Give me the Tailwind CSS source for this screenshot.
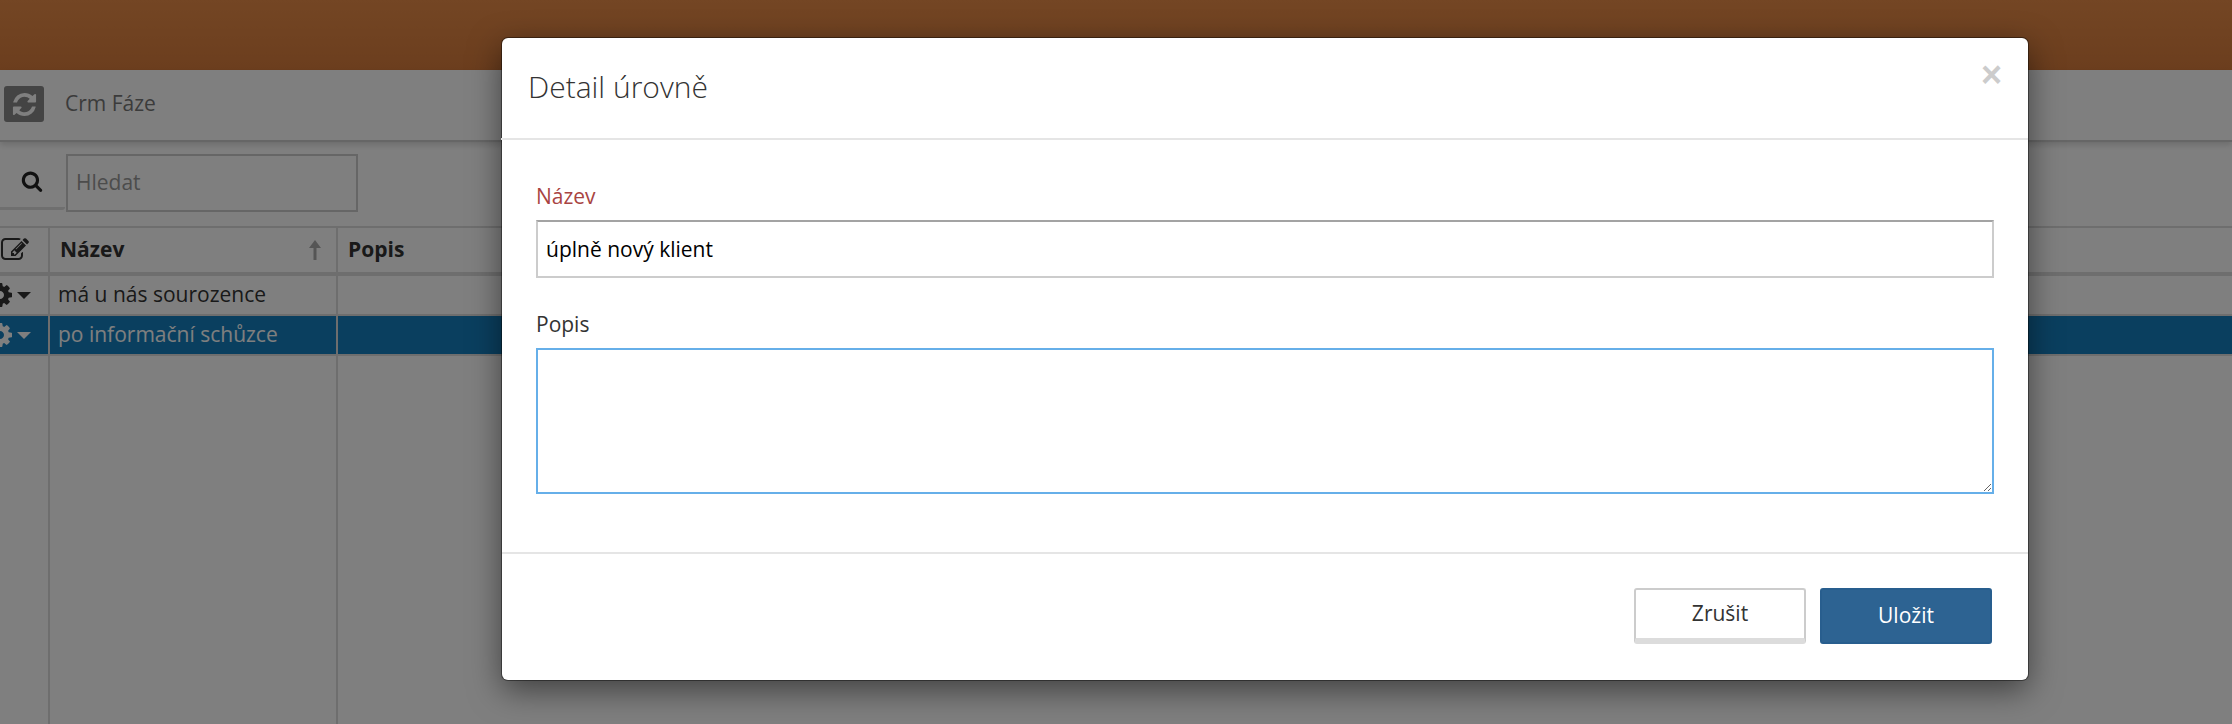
<!DOCTYPE html>
<html lang="cs">
<head>
  <meta charset="UTF-8" />
  <title>Crm Fáze</title>
  <script src="https://cdn.jsdelivr.net/npm/@tailwindcss/browser@4"></script>
</head>
<body class="relative h-[724px] w-[2232px] overflow-hidden bg-white font-['Open_Sans',sans-serif] text-[21px] text-[#333]">
  <!-- page behind the dialog -->
  <div class="h-[70px] bg-gradient-to-b from-[#e88c48] to-[#d87c3c]"></div>

  <div class="flex h-[72px] items-center border-b-2 border-[#cccccc] pb-[2px] pl-1 shadow-[0_3px_6px_rgba(0,0,0,0.15)]">
    <button class="flex h-9 w-10 items-center justify-center rounded-[3px] bg-[#888888]">
      <svg class="h-[27px] w-[27px] fill-white" viewBox="0 0 1792 1792"><path d="M1639 1056q0 5-1 7-64 268-268 434.500t-478 166.500q-146 0-282.500-55t-243.500-157l-129 129q-19 19-45 19t-45-19-19-45v-448q0-26 19-45t45-19h448q26 0 45 19t19 45-19 45l-137 137q71 66 161 102t187 36q134 0 250-65t186-179q11-17 53-117 8-23 30-23h192q13 0 22.500 9.500t9.500 22.500zm25-800v448q0 26-19 45t-45 19h-448q-26 0-45-19t-19-45 19-45l138-138q-148-137-349-137-134 0-250 65t-186 179q-11 17-53 117-8 23-30 23h-199q-13 0-22.500-9.500t-9.500-22.500v-7q65-268 270-434.500t480-166.500q146 0 284 55.500t245 156.500l130-129q19-19 45-19t45 19 19 45z"/></svg>
    </button>
    <span class="ml-[21px] text-[#777]">Crm Fáze</span>
  </div>

  <div class="flex h-[84px] items-start pt-3">
    <button class="flex h-[56px] w-[65px] items-center justify-end rounded-r-[3px] border-b-[3px] border-[#dedede] pr-[22px]">
      <svg class="h-[22px] w-[22px] fill-[#222]" viewBox="0 0 1792 1792"><path d="M1216 832q0-185-131.500-316.500t-316.500-131.500-316.500 131.500-131.500 316.500 131.500 316.500 316.500 131.500 316.500-131.500 131.500-316.500zm512 832q0 52-38 90t-90 38q-54 0-90-38l-343-342q-179 124-399 124-143 0-273.500-55.500t-225-150-150-225-55.500-273.500 55.500-273.500 150-225 225-150 273.500-55.500 273.500 55.500 225 150 150 225 55.500 273.500q0 220-124 399l343 343q37 37 37 90z"/></svg>
    </button>
    <div class="ml-px flex h-[58px] w-[292px] items-center border-2 border-[#cccccc] pl-2 text-[#999]">Hledat</div>
  </div>

  <div class="grid h-[498px] grid-cols-[50px_288px_1fr] grid-rows-[50px_40px_40px_1fr]">
    <div class="flex items-center border-t-2 border-r-2 border-b-4 border-[#dddddd] pl-px">
      <svg class="h-[28px] w-[28px] fill-[#333]" viewBox="0 0 1792 1792"><path d="M888 1184l116-116-152-152-116 116v56h96v96h56zm440-720q-16-16-33 1l-350 350q-17 17-1 33t33-1l350-350q17-17 1-33zm80 594v190q0 119-84.500 203.500t-203.500 84.500h-832q-119 0-203.500-84.500t-84.500-203.500v-832q0-119 84.500-203.500t203.500-84.500h832q63 0 117 25 15 7 18 23 3 17-9 29l-49 49q-14 14-32 8-23-6-45-6h-832q-66 0-113 47t-47 113v832q0 66 47 113t113 47h832q66 0 113-47t47-113v-126q0-13 9-22l64-64q15-15 35-7t20 29zm-96-738l288 288-672 672h-288v-288zm444 132l-92 92-288-288 92-92q28-28 68-28t68 28l152 152q28 28 28 68t-28 68z"/></svg>
    </div>
    <div class="flex items-center justify-between border-t-2 border-r-2 border-b-4 border-[#dddddd] pr-[14px] pl-[10px] font-bold">
      <span>Název</span>
      <svg class="h-[20px] w-[14px] fill-[#aaa]" viewBox="0 0 14 20"><path d="M7 0l6 8H8.500v12h-3V8H1z"/></svg>
    </div>
    <div class="flex items-center border-t-2 border-b-4 border-[#dddddd] pl-[10px] font-bold">Popis</div>

    <div class="flex items-center border-r-2 border-b-2 border-[#dddddd] pl-[17px]">
      <svg class="absolute left-[-14px] h-[28px] w-[28px] fill-[#333]" viewBox="0 0 1792 1792"><path d="M1152 896q0-106-75-181t-181-75-181 75-75 181 75 181 181 75 181-75 75-181zm512-109v222q0 12-8 23t-20 13l-185 28q-19 54-39 91 35 50 107 138 10 12 10 25t-9 23q-27 37-99 108t-94 71q-12 0-26-9l-138-108q-44 23-91 38-16 136-29 186-7 28-36 28h-222q-14 0-24.500-8.500t-11.500-21.500l-28-184q-49-16-90-37l-141 107q-10 9-25 9-14 0-25-11-126-114-165-168-7-10-7-23 0-12 8-23 15-21 51-66.500t54-70.500q-27-50-41-99l-183-27q-13-2-21-12.500t-8-23.500v-222q0-12 8-23t19-13l186-28q14-46 39-92-40-57-107-138-10-12-10-24 0-10 9-23 26-36 98.500-107.500t94.500-71.500q13 0 26 10l138 107q44-23 91-38 16-136 29-186 7-28 36-28h222q14 0 24.500 8.500t11.500 21.500l28 184q49 16 90 37l142-107q9-9 24-9 13 0 25 10 129 119 165 170 7 8 7 22 0 12-8 23-15 21-51 66.500t-54 70.500q26 50 41 98l183 28q13 2 21 12.500t8 23.500z"/></svg>
      <span class="h-0 w-0 border-x-[7px] border-t-[7px] border-x-transparent border-t-[#333]"></span>
    </div>
    <div class="flex items-center border-r-2 border-b-2 border-[#dddddd] pl-2">má u nás sourozence</div>
    <div class="border-b-2 border-[#dddddd]"></div>

    <div class="flex items-center border-r-2 border-b-2 border-r-[#dddddd] border-b-[#dddddd] bg-[#147fbf] pl-[17px]">
      <svg class="absolute left-[-14px] h-[28px] w-[28px] fill-white" viewBox="0 0 1792 1792"><path d="M1152 896q0-106-75-181t-181-75-181 75-75 181 75 181 181 75 181-75 75-181zm512-109v222q0 12-8 23t-20 13l-185 28q-19 54-39 91 35 50 107 138 10 12 10 25t-9 23q-27 37-99 108t-94 71q-12 0-26-9l-138-108q-44 23-91 38-16 136-29 186-7 28-36 28h-222q-14 0-24.500-8.500t-11.500-21.500l-28-184q-49-16-90-37l-141 107q-10 9-25 9-14 0-25-11-126-114-165-168-7-10-7-23 0-12 8-23 15-21 51-66.500t54-70.500q-27-50-41-99l-183-27q-13-2-21-12.500t-8-23.500v-222q0-12 8-23t19-13l186-28q14-46 39-92-40-57-107-138-10-12-10-24 0-10 9-23 26-36 98.500-107.500t94.500-71.500q13 0 26 10l138 107q44-23 91-38 16-136 29-186 7-28 36-28h222q14 0 24.500 8.500t11.500 21.500l28 184q49 16 90 37l142-107q9-9 24-9 13 0 25 10 129 119 165 170 7 8 7 22 0 12-8 23-15 21-51 66.500t-54 70.500q26 50 41 98l183 28q13 2 21 12.500t8 23.500z"/></svg>
      <span class="h-0 w-0 border-x-[7px] border-t-[7px] border-x-transparent border-t-white"></span>
    </div>
    <div class="flex items-center border-r-2 border-b-2 border-r-[#dddddd] border-b-[#dddddd] bg-[#147fbf] pl-2 text-white">po informační schůzce</div>
    <div class="border-b-2 border-[#dddddd] bg-[#147fbf]"></div>

    <div class="border-r-2 border-[#dddddd]"></div>
    <div class="border-r-2 border-[#dddddd]"></div>
    <div></div>
  </div>

  <!-- modal backdrop -->
  <div class="absolute inset-0 bg-black/50"></div>

  <!-- dialog -->
  <div class="absolute top-[38px] left-[502px] flex h-[642px] w-[1526px] flex-col rounded-[6px] bg-white shadow-[0_0_0_1px_rgba(0,0,0,0.4),0_10px_32px_rgba(0,0,0,0.5)]">
    <div class="relative flex h-[100px] shrink-0 items-center pb-[4px] pl-[26px]">
      <h4 class="text-[30px] font-light text-[#333]">Detail úrovně</h4>
      <span class="absolute top-[10px] right-[26px] font-['Liberation_Sans',sans-serif] text-[36px] font-bold text-[#cccccc]">×</span>
    </div>
    <div class="-ml-px h-[2px] shrink-0 bg-[#e5e5e5]"></div>

    <div class="flex flex-1 flex-col px-[34px] pt-[38px]">
      <label class="mb-[6px] leading-[36px] text-[#a94442]">Název</label>
      <input value="úplně nový klient" class="h-[58px] border-2 border-[#cccccc] border-t-[#a3a3a3] px-2 text-black outline-none" />
      <label class="mt-[28px] mb-[6px] leading-[36px] text-[#333]">Popis</label>
      <textarea class="h-[146px] border-2 border-[#66afe9] outline-none"></textarea>
    </div>

    <div class="h-[2px] shrink-0 bg-[#e5e5e5]"></div>
    <div class="flex h-[126px] shrink-0 items-start justify-end gap-[14px] pt-[34px] pr-[36px]">
      <button class="h-14 w-[172px] rounded-[3px] border-2 border-b-[6px] border-[#cccccc] border-b-[#dcdcdc] bg-white text-[#333]">Zrušit</button>
      <button class="h-14 w-[172px] rounded-[3px] border-2 border-[#285e8e] bg-[#2d6392] text-white">Uložit</button>
    </div>
  </div>
</body>
</html>
